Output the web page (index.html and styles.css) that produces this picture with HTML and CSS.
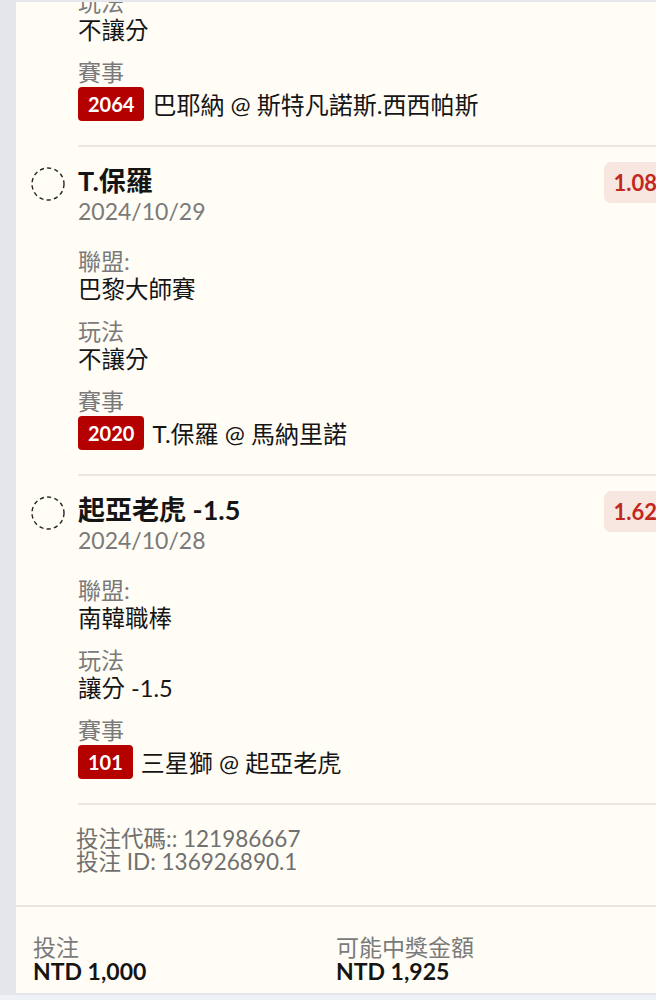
FILE: index.html
```html
<!DOCTYPE html>
<html lang="zh-Hant">
<head>
<meta charset="UTF-8">
<meta name="viewport" content="width=device-width, initial-scale=1.0">
<title>投注明細</title>
<link rel="stylesheet" href="styles.css">
</head>
<body>

<div class="page">
  <div class="card">
    <div class="scroll">

      <!-- 第一注（已捲動到上方） -->
      <div class="bet">
        <svg class="bet-check" viewBox="0 0 34 34"><circle cx="17" cy="17" r="16"/></svg>
        <div class="bet-body">
          <div class="bet-head">
            <div>
              <div class="bet-title">巴耶納</div>
              <div class="bet-date">2024/10/29</div>
            </div>
            <span class="odds">1.20</span>
          </div>
          <div class="field">
            <div class="field-label">聯盟:</div>
            <div class="field-value">巴黎大師賽</div>
          </div>
          <div class="field">
            <div class="field-label">玩法</div>
            <div class="field-value">不讓分</div>
          </div>
          <div class="field">
            <div class="field-label">賽事</div>
            <div class="match"><span class="match-no">2064</span>巴耶納 @ 斯特凡諾斯.西西帕斯</div>
          </div>
        </div>
      </div>

      <div class="bet">
        <svg class="bet-check" viewBox="0 0 34 34"><circle cx="17" cy="17" r="16"/></svg>
        <div class="bet-body">
          <div class="bet-head">
            <div>
              <div class="bet-title">T.保羅</div>
              <div class="bet-date">2024/10/29</div>
            </div>
            <span class="odds">1.08</span>
          </div>
          <div class="field">
            <div class="field-label">聯盟:</div>
            <div class="field-value">巴黎大師賽</div>
          </div>
          <div class="field">
            <div class="field-label">玩法</div>
            <div class="field-value">不讓分</div>
          </div>
          <div class="field">
            <div class="field-label">賽事</div>
            <div class="match"><span class="match-no">2020</span>T.保羅 @ 馬納里諾</div>
          </div>
        </div>
      </div>

      <div class="bet">
        <svg class="bet-check" viewBox="0 0 34 34"><circle cx="17" cy="17" r="16"/></svg>
        <div class="bet-body">
          <div class="bet-head">
            <div>
              <div class="bet-title">起亞老虎 -1.5</div>
              <div class="bet-date">2024/10/28</div>
            </div>
            <span class="odds">1.62</span>
          </div>
          <div class="field">
            <div class="field-label">聯盟:</div>
            <div class="field-value">南韓職棒</div>
          </div>
          <div class="field">
            <div class="field-label">玩法</div>
            <div class="field-value">讓分 -1.5</div>
          </div>
          <div class="field">
            <div class="field-label">賽事</div>
            <div class="match"><span class="match-no">101</span>三星獅 @ 起亞老虎</div>
          </div>
        </div>
      </div>

      <div class="bet-info">
        <div>投注代碼:: 121986667</div>
        <div>投注 ID: 136926890.1</div>
      </div>
    </div>

    <div class="summary">
      <div>
        <div class="summary-label">投注</div>
        <div class="summary-value">NTD 1,000</div>
      </div>
      <div>
        <div class="summary-label">可能中獎金額</div>
        <div class="summary-value">NTD 1,925</div>
      </div>
    </div>
  </div>
  <div class="page-foot"></div>
</div>

</body>
</html>
```

FILE: styles.css
```css
body {
    margin: 0;
    padding: 0;
    width: 656px;
    height: 1000px;
    overflow: hidden;
    background-color: #e5e6ea;
    font-family: Lato, "Noto Sans CJK TC", sans-serif;
    color: #151515;
}
.page {
    padding-left: 16px;
}
.card {
    width: 656px;
    background-color: #fffdf5;
    border-top: 2px solid #e6e7ea;
}
.scroll {
    height: 903px;
    overflow: hidden;
    border-bottom: 2px solid #e9e6e0;
}
.scroll > .bet:first-child {
    margin-top: -184px;
}

.bet {
    display: flex;
    gap: 13px;
    padding-left: 15px;
}
.bet-check {
    flex-shrink: 0;
    width: 34px;
    height: 34px;
    margin-top: 20px;
    fill: none;
    stroke: #262626;
    stroke-width: 1.4;
    stroke-dasharray: 4.2 3.2;
}
.bet-body {
    flex: 1;
    padding: 18px 6px 24px 0;
    border-bottom: 2px solid #ebe8e2;
}
.bet-head {
    display: flex;
    justify-content: space-between;
    align-items: flex-start;
    margin-bottom: 22px;
}
.bet-title {
    font-size: 27px;
    line-height: 32px;
    font-weight: 700;
}
.bet-date {
    font-size: 23px;
    line-height: 28px;
    color: #7a7a7a;
}
.odds {
    margin-top: -3px;
    padding: 0 9px;
    height: 41px;
    line-height: 41px;
    border-radius: 7px;
    background-color: #f8e6e1;
    color: #c2281d;
    font-size: 22px;
    font-weight: 700;
}

.field {
    margin-bottom: 14px;
}
.field:last-child {
    margin-bottom: 0;
}
.field-label {
    font-size: 23px;
    line-height: 28px;
    color: #7a7a7a;
}
.field-value {
    font-size: 23.5px;
    line-height: 28px;
}
.match {
    display: flex;
    align-items: center;
    gap: 8px;
    font-size: 24px;
}
.match-no {
    height: 34px;
    line-height: 34px;
    padding: 0 10px;
    border-radius: 4px;
    background-color: #b50000;
    color: #fff;
    font-size: 20px;
    font-weight: 700;
}

.bet-info {
    padding: 22px 0 0 60px;
    font-size: 22.5px;
    line-height: 23px;
    color: #707070;
}

.summary {
    display: grid;
    grid-template-columns: 303px 1fr;
    height: 88px;
    padding: 28px 17px 0;
    box-sizing: border-box;
    border-bottom: 2px solid #e3e6ea;
}
.summary-label {
    font-size: 23px;
    line-height: 24px;
    color: #7a7a7a;
}
.summary-value {
    font-size: 23px;
    line-height: 24px;
    font-weight: 700;
}
.page-foot {
    margin-left: -16px;
    height: 20px;
    background-color: #eef2f7;
}
```
